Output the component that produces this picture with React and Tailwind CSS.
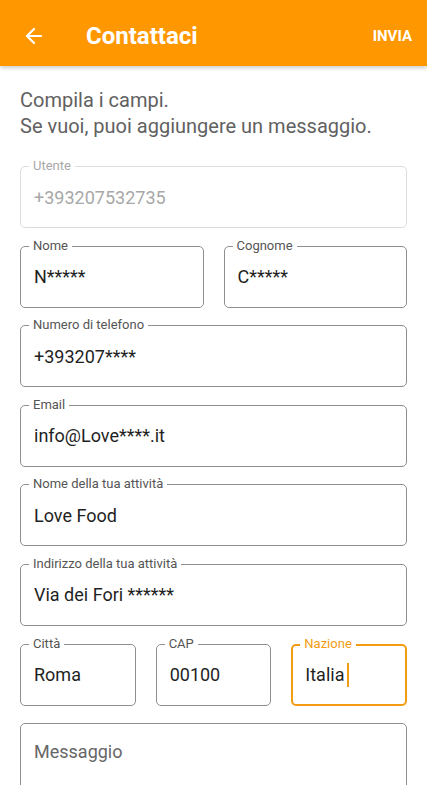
import { ArrowLeft } from 'lucide-react'

function Field({ label, value, disabled, focused, className = '' }) {
  const border = focused
    ? 'border-2 border-[#f39c12]'
    : disabled
      ? 'border border-[#dcdcdc]'
      : 'border border-[#8f8f8f]'
  return (
    <div className={`relative h-[62px] rounded-[5px] ${border} ${className}`}>
      <span
        className={`absolute bg-white px-[4px] text-[13px] leading-[18px] ${
          focused ? 'left-[7px] -top-[11px] text-[#f39c12]' : disabled ? 'left-[8px] -top-[10px] text-[#a8a8a8]' : 'left-[8px] -top-[10px] text-[#555]'
        }`}
      >
        {label}
      </span>
      <div
        className={`flex h-full items-center text-[18px] ${
          disabled ? 'text-[#a8a8a8]' : 'text-[#1f1f1f]'
        } ${focused ? 'px-[12px]' : 'px-[13px]'}`}
      >
        {value}
        {focused && <span className="ml-[3px] inline-block h-[24px] w-[2px] bg-[#f39c12]" />}
      </div>
    </div>
  )
}

export default function App() {
  return (
    <div className="h-[800px] w-[427px] overflow-hidden bg-white font-['Roboto',sans-serif]">
      <header className="flex h-[66px] items-center bg-[#ff9800] pt-[6px] shadow-[0_2px_4px_rgba(0,0,0,0.2)]">
        <ArrowLeft className="ml-[22px] text-white" size={24} strokeWidth={2.2} />
        <h1 className="ml-[40px] flex-1 text-[24px] font-bold text-white">Contattaci</h1>
        <span className="mr-[15px] text-[15px] font-bold text-white">INVIA</span>
      </header>

      <div className="h-[719px] overflow-hidden px-[20px]">
        <p className="mt-[21px] text-[20px] leading-[26px] text-[#616161]">
          Compila i campi.
          <br />
          Se vuoi, puoi aggiungere un messaggio.
        </p>

        <div className="mt-[27px] flex flex-col gap-[17.6px]">
          <Field label="Utente" value="+393207532735" disabled />
          <div className="grid grid-cols-2 gap-[20px]">
            <Field label="Nome" value="N*****" />
            <Field label="Cognome" value="C*****" />
          </div>
          <Field label="Numero di telefono" value="+393207****" />
          <Field label="Email" value="info@Love****.it" />
          <Field label="Nome della tua attività" value="Love Food" />
          <Field label="Indirizzo della tua attività" value="Via dei Fori ******" />
          <div className="grid grid-cols-3 gap-[20px]">
            <Field label="Città" value="Roma" />
            <Field label="CAP" value="00100" />
            <Field label="Nazione" value="Italia" focused />
          </div>
          <div className="h-[120px] rounded-[5px] border border-[#8f8f8f] px-[13px] pt-[14px] text-[18px] text-[#666]">
            Messaggio
          </div>
        </div>
      </div>
    </div>
  )
}
